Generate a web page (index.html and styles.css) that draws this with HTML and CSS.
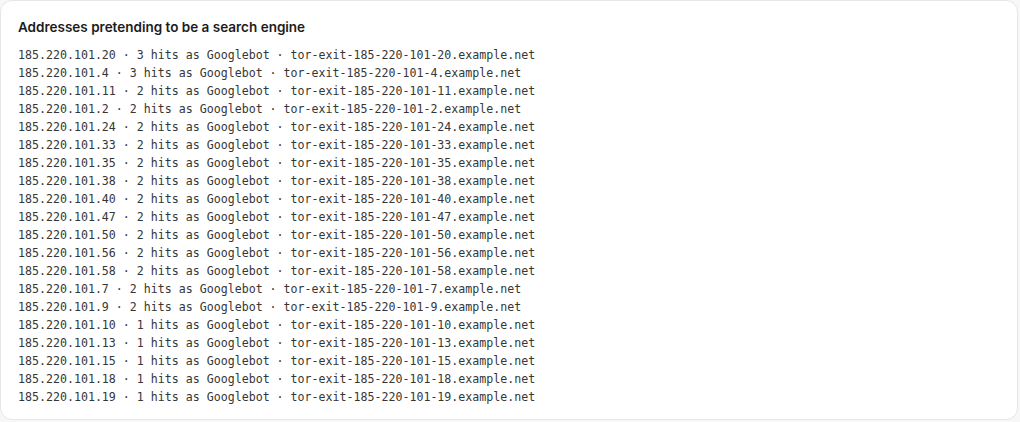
FILE: index.html
```html
<!DOCTYPE html>
<html>
<head>
<meta charset="utf-8">
<link rel="stylesheet" href="styles.css">
</head>
<body>
<div class="card">
  <h2 class="title">Addresses pretending to be a search engine</h2>
  <ul class="list">
    <li>185.220.101.20 · 3 hits as Googlebot · tor-exit-185-220-101-20.example.net</li>
    <li>185.220.101.4 · 3 hits as Googlebot · tor-exit-185-220-101-4.example.net</li>
    <li>185.220.101.11 · 2 hits as Googlebot · tor-exit-185-220-101-11.example.net</li>
    <li>185.220.101.2 · 2 hits as Googlebot · tor-exit-185-220-101-2.example.net</li>
    <li>185.220.101.24 · 2 hits as Googlebot · tor-exit-185-220-101-24.example.net</li>
    <li>185.220.101.33 · 2 hits as Googlebot · tor-exit-185-220-101-33.example.net</li>
    <li>185.220.101.35 · 2 hits as Googlebot · tor-exit-185-220-101-35.example.net</li>
    <li>185.220.101.38 · 2 hits as Googlebot · tor-exit-185-220-101-38.example.net</li>
    <li>185.220.101.40 · 2 hits as Googlebot · tor-exit-185-220-101-40.example.net</li>
    <li>185.220.101.47 · 2 hits as Googlebot · tor-exit-185-220-101-47.example.net</li>
    <li>185.220.101.50 · 2 hits as Googlebot · tor-exit-185-220-101-50.example.net</li>
    <li>185.220.101.56 · 2 hits as Googlebot · tor-exit-185-220-101-56.example.net</li>
    <li>185.220.101.58 · 2 hits as Googlebot · tor-exit-185-220-101-58.example.net</li>
    <li>185.220.101.7 · 2 hits as Googlebot · tor-exit-185-220-101-7.example.net</li>
    <li>185.220.101.9 · 2 hits as Googlebot · tor-exit-185-220-101-9.example.net</li>
    <li>185.220.101.10 · 1 hits as Googlebot · tor-exit-185-220-101-10.example.net</li>
    <li>185.220.101.13 · 1 hits as Googlebot · tor-exit-185-220-101-13.example.net</li>
    <li>185.220.101.15 · 1 hits as Googlebot · tor-exit-185-220-101-15.example.net</li>
    <li>185.220.101.18 · 1 hits as Googlebot · tor-exit-185-220-101-18.example.net</li>
    <li>185.220.101.19 · 1 hits as Googlebot · tor-exit-185-220-101-19.example.net</li>
  </ul>
</div>
</body>
</html>
```
FILE: styles.css
```css
html, body {
  margin: 0;
  padding: 0;
  background: #f7f7f7;
}
body {
  padding: 0 2px 2px 0;
  font-family: Inter, "Noto Sans", sans-serif;
}
.card {
  box-sizing: border-box;
  width: 1018px;
  height: 420px;
  background: #ffffff;
  border: 1px solid #e6e6e6;
  border-radius: 12px;
  padding: 16px 17px;
}
.title {
  margin: 0 0 9px 0;
  font-size: 13.5px;
  line-height: 20px;
  font-weight: 600;
  color: #1c1c1c;
}
.list {
  list-style: none;
  margin: 0;
  padding: 0;
  font-family: "DejaVu Sans Mono", "Liberation Mono", monospace;
  font-size: 11.62px;
  line-height: 18px;
  color: #363636;
}
.list li {
  white-space: nowrap;
}
```
